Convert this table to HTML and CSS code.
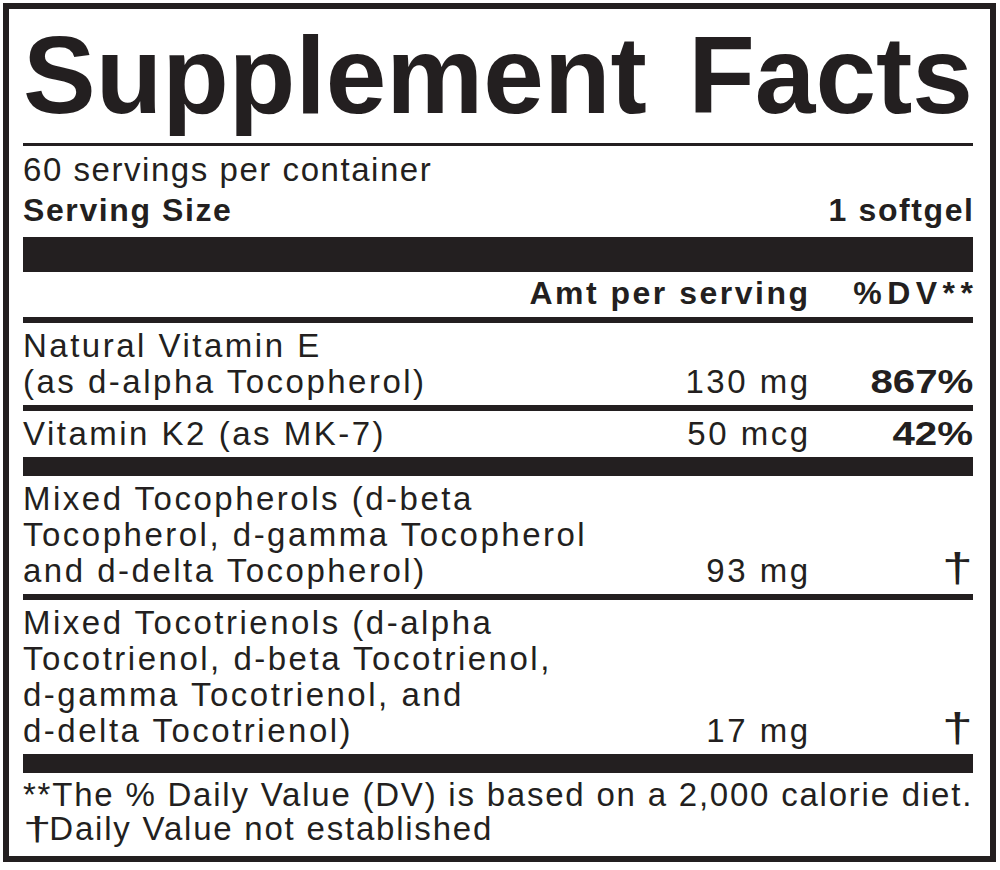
FILE: index.html
```html
<!DOCTYPE html>
<html lang="en">
<head>
<meta charset="utf-8">
<title>Supplement Facts</title>
<link rel="stylesheet" href="styles.css">
</head>
<body>
<section class="label">
  <h1 class="title"><span>Supplement</span><span>Facts</span></h1>
  <div class="serving">
    <div class="line">60 servings per container</div>
    <div class="line size"><span>Serving Size</span><span class="end">1 softgel</span></div>
  </div>
  <div class="bar bar-lg"></div>
  <div class="row head">
    <span class="name"></span>
    <span class="amt">Amt per serving</span>
    <span class="dv"><span class="dvh">%DV**</span></span>
  </div>
  <div class="rule"></div>
  <div class="row">
    <span class="name">Natural Vitamin E<br>(as d-alpha Tocopherol)</span>
    <span class="amt">130 mg</span>
    <span class="dv"><span class="val">867%</span></span>
  </div>
  <div class="rule"></div>
  <div class="row">
    <span class="name">Vitamin K2 (as MK-7)</span>
    <span class="amt">50 mcg</span>
    <span class="dv"><span class="val">42%</span></span>
  </div>
  <div class="bar"></div>
  <div class="row">
    <span class="name">Mixed Tocopherols (d-beta<br>Tocopherol, d-gamma Tocopherol<br>and d-delta Tocopherol)</span>
    <span class="amt">93 mg</span>
    <span class="dv"><span class="dag">†</span></span>
  </div>
  <div class="rule"></div>
  <div class="row">
    <span class="name">Mixed Tocotrienols (d-alpha<br>Tocotrienol, d-beta Tocotrienol,<br>d-gamma Tocotrienol, and<br>d-delta Tocotrienol)</span>
    <span class="amt">17 mg</span>
    <span class="dv"><span class="dag">†</span></span>
  </div>
  <div class="bar"></div>
  <div class="notes">
    <p>**The % Daily Value (DV) is based on a 2,000 calorie diet.</p>
    <p><span class="dag">†</span>Daily Value not established</p>
  </div>
</section>
</body>
</html>
```
FILE: styles.css
```css
* {
  box-sizing: border-box;
  margin: 0;
  padding: 0;
}

html,
body {
  background: #ffffff;
}

body {
  margin: 0;
  font-family: "Liberation Sans", Arial, Helvetica, sans-serif;
  color: #231f20;
}

.label {
  margin: 3px;
  width: 993px;
  height: 859px;
  border: 6px solid #231f20;
  padding: 0 17px 0 14px;
  overflow: hidden;
}

.title {
  display: flex;
  justify-content: space-between;
  font-size: 109px;
  line-height: 109px;
  font-weight: 700;
  padding-top: 12px;
  padding-bottom: 13px;
  border-bottom: 3px solid #231f20;
}

.serving {
  padding: 4px 0 7px;
  font-size: 33px;
  line-height: 40px;
  letter-spacing: 1.55px;
  white-space: nowrap;
}

.size {
  display: flex;
  justify-content: space-between;
  font-weight: 700;
  font-size: 32px;
  letter-spacing: 1.6px;
}

.size .end {
  margin-right: -1.6px;
}

.bar {
  height: 19px;
  background: #231f20;
}

.bar-lg {
  height: 35px;
}

.rule {
  height: 6px;
  background: #231f20;
}

.row {
  display: grid;
  grid-template-columns: 1fr auto 165px;
  align-items: end;
  padding: 5px 0 5px;
  font-size: 33px;
  line-height: 36px;
  letter-spacing: 2.5px;
  white-space: nowrap;
}

.row.head {
  padding: 3px 0 6px;
  font-weight: 700;
  font-size: 32px;
  letter-spacing: 2.5px;
}

.amt {
  text-align: right;
  margin-right: -2.5px;
}

.dv {
  text-align: right;
}

.dvh {
  letter-spacing: 5.5px;
  margin-right: -5.5px;
}

.val {
  display: inline-block;
  font-weight: 700;
  font-size: 33px;
  letter-spacing: 0;
  transform: scaleX(1.22);
  transform-origin: right center;
}

.dag {
  display: inline-block;
  font-size: 41px;
  font-weight: 400;
  line-height: 30px;
  letter-spacing: 0;
  vertical-align: 0;
  transform: scaleX(1.35);
  transform-origin: right center;
}

.notes {
  padding-top: 5px;
  font-size: 33px;
  line-height: 34px;
  letter-spacing: 1.78px;
  white-space: nowrap;
}

.notes .dag {
  font-size: 33px;
  line-height: 34px;
  transform: scaleX(1.55);
  transform-origin: left center;
  margin-right: 8px;
}
```
